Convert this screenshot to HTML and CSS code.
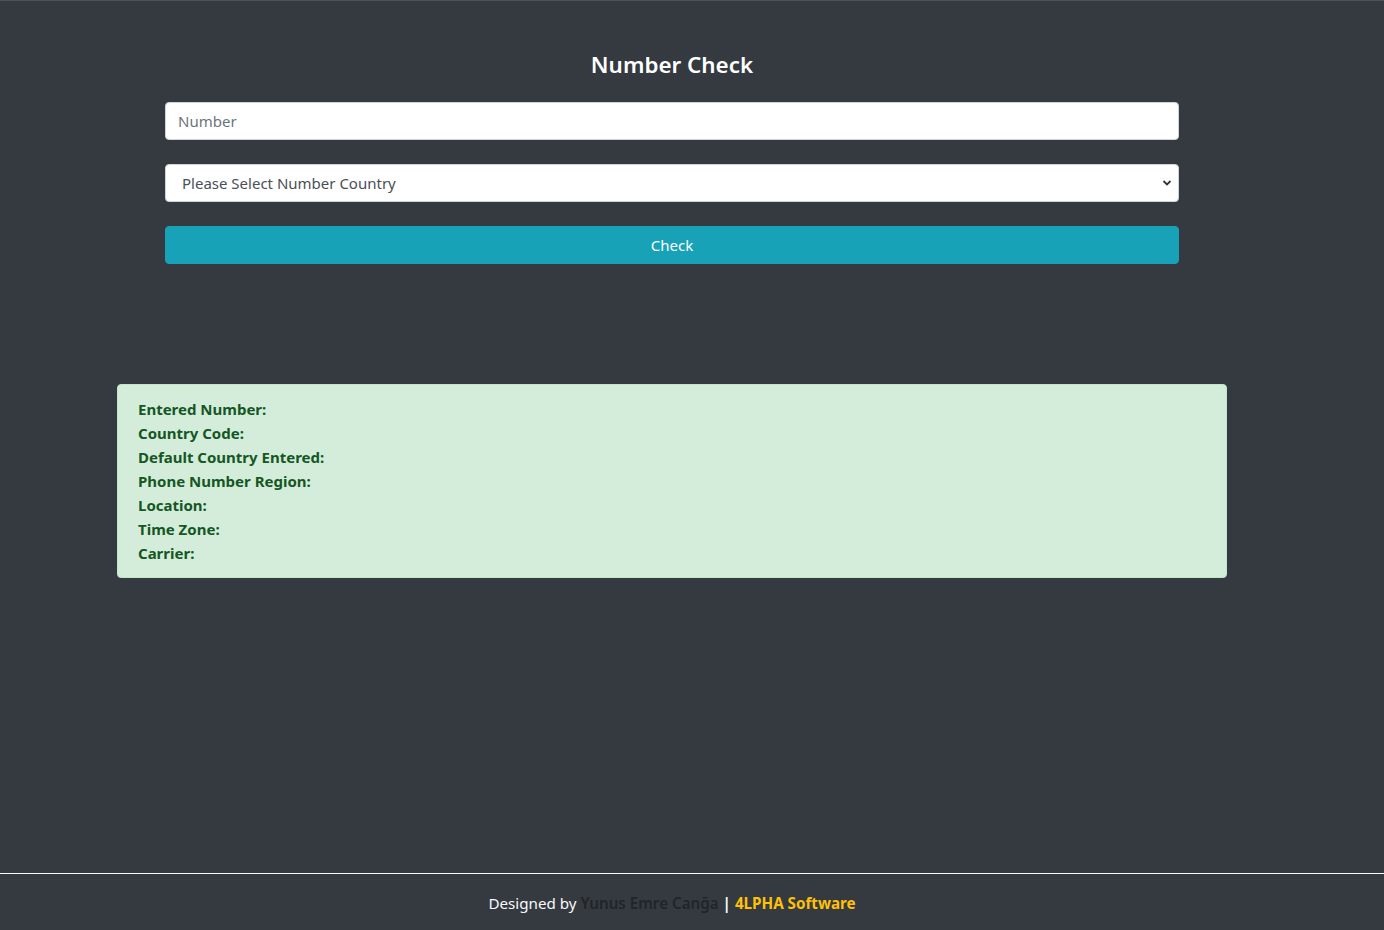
FILE: index.html
```html
<!DOCTYPE html>
<html lang="en">
<head>
<meta charset="utf-8">
<title>Number Check</title>
<link rel="stylesheet" href="styles.css">
</head>
<body>
<div class="page">
  <main class="main">
    <h4 class="title">Number Check</h4>
    <form class="form">
      <input class="control" type="text" placeholder="Number">
      <div class="select-wrap">
        <select class="control select">
          <option>Please Select Number Country</option>
        </select>
        <svg class="chevron" width="10" height="8" viewBox="0 0 10 8"><path d="M1.5 2 L5 5.5 L8.5 2" fill="none" stroke="#333" stroke-width="1.8"/></svg>
      </div>
      <button class="btn" type="button">Check</button>
    </form>
    <div class="alert">
      <div class="row">Entered Number:</div>
      <div class="row">Country Code:</div>
      <div class="row">Default Country Entered:</div>
      <div class="row">Phone Number Region:</div>
      <div class="row">Location:</div>
      <div class="row">Time Zone:</div>
      <div class="row">Carrier:</div>
    </div>
  </main>
  <footer class="footer">
    <span class="f-text">Designed by <span class="f-name">Yunus Emre Canğa</span> <b class="f-bar">|</b> <b class="f-brand">4LPHA Software</b></span>
  </footer>
</div>
</body>
</html>
```

FILE: styles.css
```css
* { box-sizing: border-box; }
html, body { margin: 0; padding: 0; }
body {
  background: #343a40;
  font-family: "Noto Sans", "Open Sans", sans-serif;
  font-size: 16px;
  color: #212529;
}
.page {
  min-height: 930px;
  display: flex;
  flex-direction: column;
  border-top: 1px solid #4e5257;
}
.main {
  width: 1110px;
  margin-left: 117px;
  padding-top: 49px;
  flex: 1;
}
.title {
  margin: 0 0 23px;
  text-align: center;
  color: #fff;
  font-size: 22.4px;
  font-weight: 600;
  line-height: 29px;
}
.form {
  margin: 0 48px;
  display: flex;
  flex-direction: column;
  gap: 24px;
}
.control {
  display: block;
  width: 100%;
  height: 38px;
  padding: 6px 12px;
  font-family: inherit;
  font-size: 15px;
  color: #495057;
  background: #fff;
  border: 1px solid #ced4da;
  border-radius: 4px;
  outline: none;
}
.control::placeholder { color: #6c757d; }
.select-wrap { position: relative; }
.select {
  appearance: none;
  -webkit-appearance: none;
  padding-left: 16px;
}
.chevron {
  position: absolute;
  right: 7px;
  top: 15px;
}
.btn {
  height: 38px;
  width: 100%;
  border: 1px solid #17a2b8;
  background: #17a2b8;
  color: #fff;
  font-family: inherit;
  font-size: 15px;
  border-radius: 4px;
  padding: 0;
}
.alert {
  margin-top: 120px;
  background: #d4edda;
  border: 1px solid #c3e6cb;
  border-radius: 4px;
  padding: 12px 20px 12px;
  color: #155724;
}
.row {
  font-weight: 700;
  font-size: 15px;
  line-height: 24px;
}
.footer {
  border-top: 1px solid #f8f9fa;
  height: 57px;
  display: flex;
  align-items: center;
  justify-content: center;
  padding-top: 1px;
  padding-right: 40px;
}
.f-text { color: #f8f9fa; font-size: 15.2px; }
.f-name { color: #212529; font-weight: 600; }
.f-bar { color: #f8f9fa; }
.f-brand { color: #ffc107; }
```
